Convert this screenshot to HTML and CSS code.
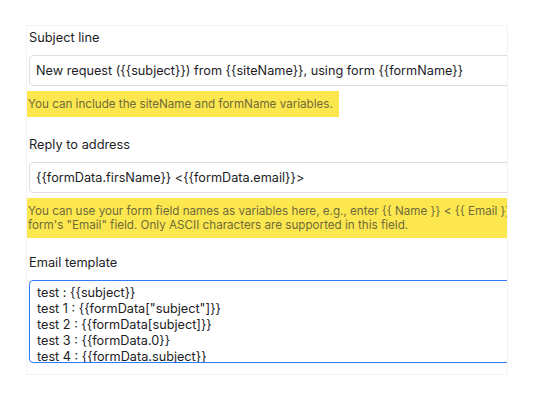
FILE: index.html
```html
<!DOCTYPE html>
<html lang="en">
<head>
  <meta charset="UTF-8" />
  <title>Email settings</title>
  <meta name="viewport" content="width=device-width, initial-scale=1" />
  <link rel="stylesheet" href="styles.css">
</head>
<body>
  <div class="panel">
    <div class="field">
      <label class="label">Subject line</label>
      <div class="input">New request ({{subject}}) from {{siteName}}, using form {{formName}}</div>
      <p class="help help-short">You can include the siteName and formName variables.</p>
    </div>

    <div class="field">
      <label class="label">Reply to address</label>
      <div class="input">{{formData.firsName}} &lt;{{formData.email}}&gt;</div>
      <p class="help help-wide">You can use your form field names as variables here, e.g., enter {{ Name }} &lt; {{ Email }} to use your form's "Name" and<br>form's "Email" field. Only ASCII characters are supported in this field.</p>
    </div>

    <div class="field">
      <label class="label">Email template</label>
      <div class="textarea">test : {{subject}}
test 1 : {{formData["subject"]}}
test 2 : {{formData[subject]}}
test 3 : {{formData.0}}
test 4 : {{formData.subject}}
test 5 : {{formData.email}}</div>
    </div>
  </div>
</body>
</html>
```

FILE: styles.css
```css
body {
  margin: 0;
  font-family: Inter, 'Noto Sans', sans-serif;
  background: #fff;
  color: #1d1d1f;
}
.panel {
  margin: 25px 0 0 26px;
  width: 478px;
  height: 344px;
  padding: 4px 0 0 2px;
  border: 1px solid #f3f3f3;
  overflow: hidden;
}
.field {
  width: 560px;
}
.label {
  display: block;
  font-size: 12.8px;
  line-height: 16px;
  margin: 0 0 9px;
}
.input {
  height: 31px;
  box-sizing: border-box;
  border: 1px solid #dedede;
  border-radius: 4px;
  padding: 0 6px;
  font-size: 12.7px;
  line-height: 29px;
  white-space: nowrap;
}
.help {
  margin: 5px 0 0 -2px;
  padding: 6px 1px;
  background: #fde74f;
  color: #6f6b3c;
  font-size: 11.65px;
  line-height: 14px;
  white-space: nowrap;
}
.help-short {
  display: inline-block;
  padding-right: 6px;
  margin-bottom: 20px;
}
.help-wide {
  margin-bottom: 17px;
}
.textarea {
  height: 83px;
  box-sizing: border-box;
  border: 1px solid #2f7cf6;
  border-radius: 4px;
  padding: 4px 7px;
  font-size: 12.7px;
  line-height: 16px;
  white-space: pre;
  overflow: hidden;
}
```
